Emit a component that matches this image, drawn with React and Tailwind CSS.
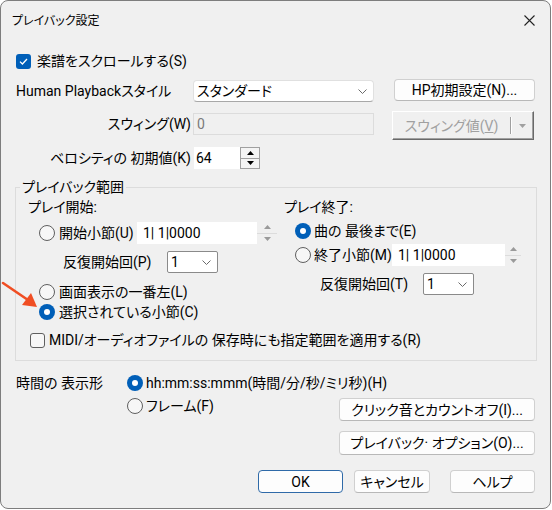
import React from "react";

const Radio = ({ checked }) =>
    checked ? (
        <span className="flex h-[16px] w-[16px] shrink-0 items-center justify-center rounded-full bg-[#005fb8]">
            <span className="block h-[6px] w-[6px] rounded-full bg-white" />
        </span>
    ) : (
        <span className="block h-[16px] w-[16px] shrink-0 rounded-full border border-[#5f5f5f] bg-[#f7f7f7]" />
    );

const Check = ({ checked }) =>
    checked ? (
        <span className="flex h-[15px] w-[15px] shrink-0 items-center justify-center rounded-[3px] bg-[#005fb8]">
            <svg width="9" height="7" viewBox="0 0 9 7">
                <path d="M1 3.6 L3.4 6 L8 1" stroke="white" strokeWidth="1.3" fill="none" />
            </svg>
        </span>
    ) : (
        <span className="block h-[15px] w-[15px] shrink-0 rounded-[3px] border border-[#5f5f5f] bg-[#f7f7f7]" />
    );

const Chevron = () => (
    <svg width="9" height="5" viewBox="0 0 9 5">
        <path d="M0.5 0.5 L4.5 4.5 L8.5 0.5" stroke="#6a6a6a" fill="none" />
    </svg>
);

const Tri = ({ up, color = "#000" }) => (
    <svg width="7" height="4" viewBox="0 0 7 4">
        <path d={up ? "M0 4 L3.5 0 L7 4 Z" : "M0 0 L7 0 L3.5 4 Z"} fill={color} />
    </svg>
);

// スピンボタン
const Spin = ({ w, light }) => (
    <div className={`flex h-[22px] shrink-0 flex-col ${w} ${light ? "bg-[#f0f0f0]" : ""}`}>
        <div
            className={`flex flex-1 items-center justify-center ${light ? "border-b border-[#dcdcdc]" : "border border-[#a0a0a0] bg-[#f4f4f4]"}`}
        >
            <Tri up color={light ? "#9a9a9a" : "#000"} />
        </div>
        <div
            className={`flex flex-1 items-center justify-center ${light ? "" : "border border-t-0 border-[#a0a0a0] bg-[#f4f4f4]"}`}
        >
            <Tri color={light ? "#9a9a9a" : "#000"} />
        </div>
    </div>
);

const SmallSelect = () => (
    <div className="flex h-[22px] w-[51px] items-center justify-between rounded-[2px] border border-[#8a8a8a] bg-white pl-[3px] pr-[6px]">
        <span>1</span>
        <Chevron />
    </div>
);

const Btn = ({ w, h = "h-[23px]", children, primary, className = "" }) => (
    <div
        className={`flex ${h} ${w} items-center justify-center whitespace-nowrap rounded-[4px] border bg-[#fdfdfd] ${primary ? "border-[#2f6aa8]" : "border-[#d0d0d0] border-b-[#b8b8b8]"} ${className}`}
    >
        {children}
    </div>
);

export default function App() {
    return (
        <div className="relative h-[510px] w-[552px] bg-white font-['Roboto','Noto_Sans_CJK_JP',sans-serif] text-[14px] leading-[20px] text-black [font-feature-settings:'palt']">
            <div className="flex h-[509px] w-[551px] flex-col overflow-hidden rounded-lg border border-[#7d7d7d] bg-[#f0f0f0]">
                {/* タイトルバー */}
                <div className="flex h-[39px] shrink-0 items-center justify-between pl-[11px] pr-[15px]">
                    <span className="text-[12px]">プレイバック設定</span>
                    <svg width="11" height="11" viewBox="0 0 11 11">
                        <path d="M0.5 0.5 L10.5 10.5 M10.5 0.5 L0.5 10.5" stroke="#222" strokeWidth="1.1" />
                    </svg>
                </div>

                <div className="flex flex-col pl-[15px] pr-[15px]">
                    {/* 楽譜スクロール */}
                    <div className="mt-[10px] flex h-[22px] items-center">
                        <Check checked />
                        <span className="ml-[6px]">楽譜をスクロールする(S)</span>
                    </div>

                    {/* Human Playback */}
                    <div className="mt-[7px] flex h-[23px]">
                        <div className="flex h-[22px] w-[177px] items-center self-end">
                            Human Playbackスタイル
                        </div>
                        <div className="flex h-[22px] w-[181px] items-center justify-between self-end rounded-[4px] border border-[#e0e0e0] border-b-[#a8a8a8] bg-white pl-[3px] pr-[6px]">
                            <span>スタンダード</span>
                            <Chevron />
                        </div>
                        <Btn w="w-[141px]" h="h-[22px]" className="ml-auto">
                            HP初期設定(N)...
                        </Btn>
                    </div>

                    {/* スウィング */}
                    <div className="mt-[9px] flex h-[30px]">
                        <div className="mt-[2px] flex h-[22px] items-center">
                            <span className="w-[175px] text-right">スウィング(W)</span>
                            <div className="ml-[2px] flex h-[22px] w-[181px] items-center border border-[#dcdcdc] pl-[3px] text-[#7a7a7a]">
                                0
                            </div>
                        </div>
                        <div className="ml-auto mr-[1px] flex h-[29px] w-[142px] items-center border border-t-white border-l-white border-r-[#696969] border-b-[#696969] bg-[#f0f0f0] shadow-[inset_-1px_-1px_0_#a0a0a0]">
                            <span className="w-[117px] text-center text-[#a0a0a0]">
                                スウィング値(<span className="underline">V</span>)
                            </span>
                            <span className="h-[17px] w-[2px] border-l border-r border-l-[#a0a0a0] border-r-white" />
                            <span className="flex flex-1 justify-center">
                                <Tri color="#a0a0a0" />
                            </span>
                        </div>
                    </div>

                    {/* ベロシティ */}
                    <div className="mt-[6px] flex h-[22px] items-center">
                        <span className="w-[175px] text-right">ベロシティの 初期値(K)</span>
                        <div className="ml-[3px] flex h-[22px] w-[46px] items-center bg-white pl-[2px]">64</div>
                        <Spin w="w-[20px]" />
                    </div>

                    {/* プレイバック範囲 */}
                    <fieldset className="mt-[8px] -ml-[1px] h-[184px] w-[522px] border border-[#dcdcdc] pl-[4px]">
                        <legend className="h-[20px] px-[2px] leading-[20px]">プレイバック範囲</legend>
                        <div className="flex pl-[8px]">
                            <div className="flex w-[256px] flex-col">
                                <div className="h-[20px]">プレイ開始:</div>
                                <div className="mt-[5px] flex h-[22px] items-center">
                                    <span className="ml-[11px]">
                                        <Radio />
                                    </span>
                                    <span className="ml-[4px] w-[78px] overflow-hidden whitespace-nowrap">開始小節(U)</span>
                                    <div className="flex h-[22px] w-[120px] items-center bg-white pl-[6px]">1| 1|0000</div>
                                    <Spin w="w-[20px]" light />
                                </div>
                                <div className="mt-[7px] flex h-[22px] items-center">
                                    <span className="ml-[35px] w-[104px]">反復開始回(P)</span>
                                    <SmallSelect />
                                </div>
                                <div className="mt-[9px] flex h-[20px] items-center">
                                    <span className="ml-[11px]">
                                        <Radio />
                                    </span>
                                    <span className="ml-[4px]">画面表示の一番左(L)</span>
                                </div>
                                <div className="flex h-[20px] items-center">
                                    <span className="ml-[11px]">
                                        <Radio checked />
                                    </span>
                                    <span className="ml-[4px]">選択されている小節(C)</span>
                                </div>
                            </div>

                            <div className="flex flex-col">
                                <div className="h-[20px]">プレイ終了:</div>
                                <div className="mt-[4px] flex h-[20px] items-center">
                                    <span className="ml-[11px]">
                                        <Radio checked />
                                    </span>
                                    <span className="ml-[3px]">曲の 最後まで(E)</span>
                                </div>
                                <div className="mt-[3px] flex h-[22px] items-center">
                                    <span className="ml-[11px]">
                                        <Radio />
                                    </span>
                                    <span className="ml-[3px] w-[78px] overflow-hidden whitespace-nowrap">終了小節(M)</span>
                                    <div className="flex h-[22px] w-[113px] items-center bg-white pl-[6px]">1| 1|0000</div>
                                    <Spin w="w-[16px]" light />
                                </div>
                                <div className="mt-[7px] flex h-[22px] items-center">
                                    <span className="ml-[36px] w-[103px]">反復開始回(T)</span>
                                    <SmallSelect />
                                </div>
                            </div>
                        </div>
                        <div className="mt-[8px] flex h-[20px] items-center pl-[10px]">
                            <Check />
                            <span className="ml-[4px]">MIDI/オーディオファイルの 保存時にも指定範囲を適用する(R)</span>
                        </div>
                    </fieldset>

                    {/* 時間の表示形式 */}
                    <div className="mt-[12px] flex h-[20px] items-center">
                        <span className="w-[111px]">時間の 表示形</span>
                        <Radio checked />
                        <span className="ml-[3px] w-[243px] overflow-hidden whitespace-nowrap">
                            hh:mm:ss:mmm(時間/分/秒/ミリ秒)(H)
                        </span>
                    </div>
                    <div className="flex">
                        <div className="mt-[3px] ml-[111px] flex h-[20px] items-center">
                            <Radio />
                            <span className="ml-[3px]">フレーム(F)</span>
                        </div>
                        <div className="ml-auto flex flex-col">
                            <Btn w="w-[196px]" className="mt-[5px]">
                                クリック音とカウントオフ(I)...
                            </Btn>
                            <Btn w="w-[196px]" h="h-[24px]" className="mt-[10px]">
                                プレイバック· オプション(O)...
                            </Btn>
                        </div>
                    </div>

                    {/* OK / キャンセル / ヘルプ */}
                    <div className="mt-[15px] flex justify-end">
                        <Btn w="w-[85px]" primary>
                            OK
                        </Btn>
                        <Btn w="w-[76px]" className="ml-[11px]">
                            キャンセル
                        </Btn>
                        <Btn w="w-[85px]" className="ml-[20px]">
                            ヘルプ
                        </Btn>
                    </div>
                </div>
            </div>

            {/* 注釈の赤い矢印 */}
            <svg className="absolute left-0 top-[278px]" width="46" height="36" viewBox="0 0 46 36">
                <path d="M3 5 L28 22" stroke="#f04e23" strokeWidth="2.6" strokeLinecap="round" />
                <path d="M37 29 L22 27 L31 15 Z" fill="#f04e23" />
            </svg>
        </div>
    );
}
